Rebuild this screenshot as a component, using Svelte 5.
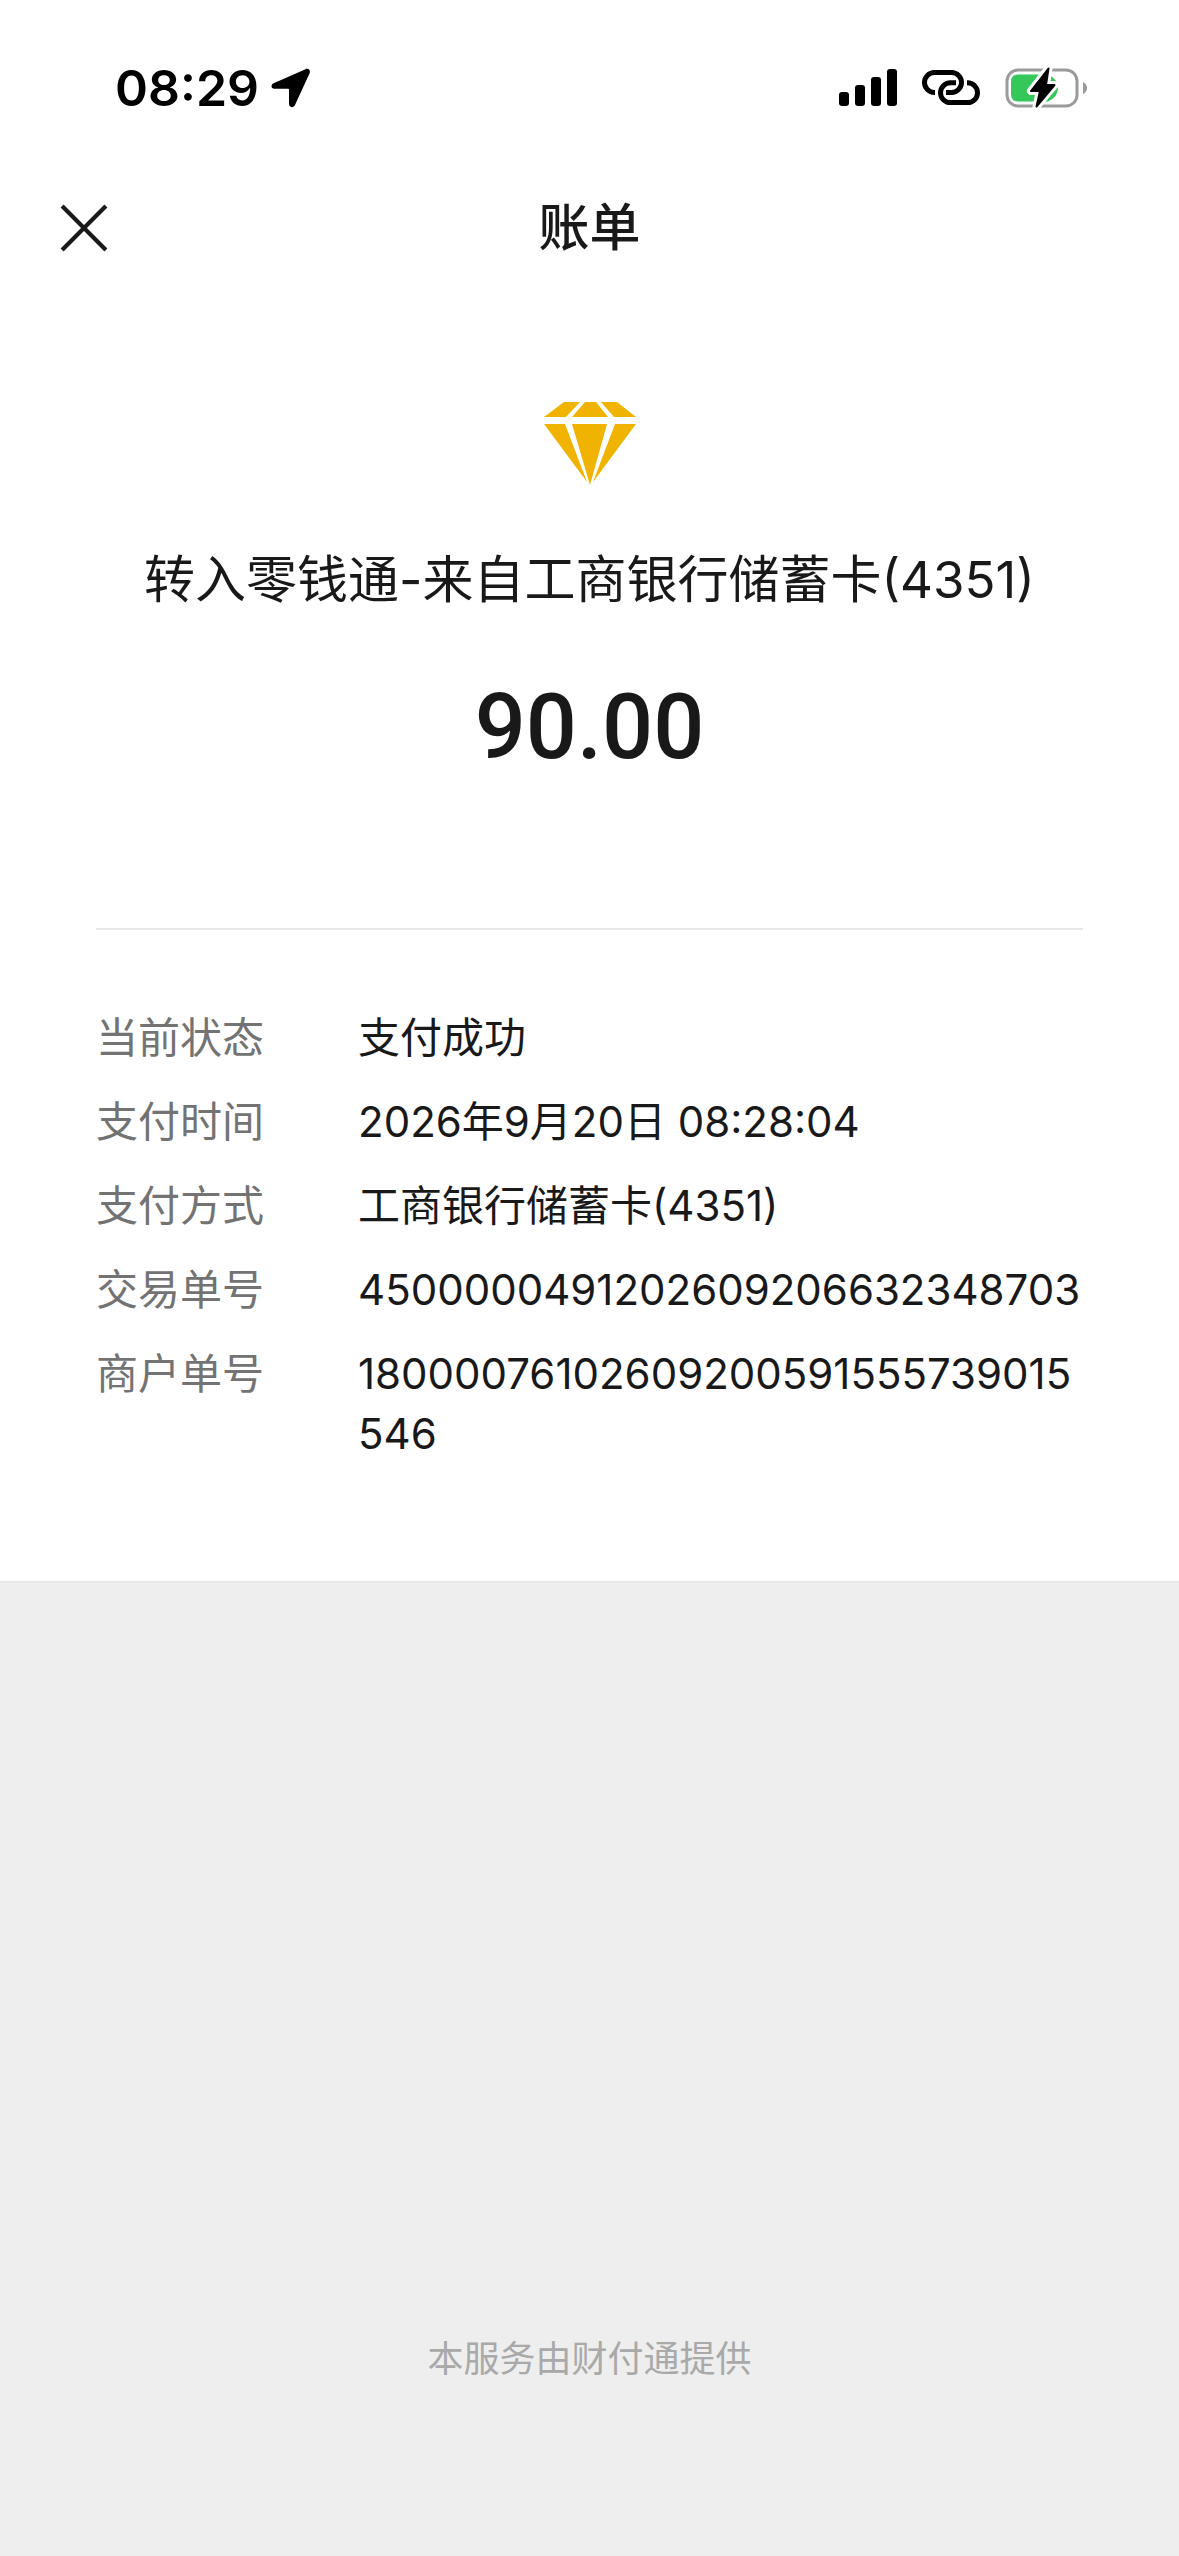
<script lang="ts">
	let open = true;

	const title = "账单";
	const name = "转入零钱通-来自工商银行储蓄卡(4351)";
	const amount = 90;

	const details = [
		{ label: "当前状态", value: "支付成功" },
		{ label: "支付时间", value: "2026年9月20日 08:28:04" },
		{ label: "支付方式", value: "工商银行储蓄卡(4351)" },
		{ label: "交易单号", value: "4500000491202609206632348703" },
		{ label: "商户单号", value: "18000076102609200591555739015546" },
	];

	function close() {
		open = false;
	}
</script>

<div class="page">
	<div class="bill">
		<div class="status-bar">
			<div class="clock">
				<span>08:29</span>
				<svg class="location" viewBox="0 0 40 40">
					<path
						d="M34.5 1.2 2.6 15.2C-.6 16.8 0 20.8 3.4 20.8H17.2Q18 20.8 18 21.6V35.6C18 39.6 22.4 40.4 24 37L38.6 5.2C39.8 2.4 37.4-.2 34.5 1.2Z"
					/>
				</svg>
			</div>
			<div class="indicators">
				<svg class="signal" viewBox="0 0 58 38">
					<rect x="0" y="23" width="10" height="14" rx="3" />
					<rect x="16" y="16" width="10" height="21" rx="3" />
					<rect x="32" y="8" width="10" height="29" rx="3" />
					<rect x="48" y="0" width="10" height="37" rx="3" />
				</svg>
				<svg class="link" viewBox="0 0 58 36">
					<path
						d="M13 22.4H12.4A9.9 9.9 0 0 1 12.4 2.6H29.6A9.9 9.9 0 0 1 29.6 22.4H24"
					/>
					<path
						d="M34 12.8H28.4A9.9 9.9 0 0 0 28.4 32.6H45.6A9.9 9.9 0 0 0 45.6 12.8H45"
					/>
				</svg>
				<svg class="battery" viewBox="0 0 84 42">
					<rect
						class="shell"
						x="2"
						y="3"
						width="70"
						height="36"
						rx="11"
					/>
					<path class="tip" d="M78 15Q82 17 82 21T78 27Z" />
					<path
						class="charge"
						d="M13 7.5H43Q53 12 53 21T43 34.5H13Q6 34.5 6 27V15Q6 7.5 13 7.5Z"
					/>
					<path
						class="bolt-gap"
						d="M43.5 1.5 26 24H35L31.5 39.5 49.5 18H41Z"
					/>
					<path
						class="bolt"
						d="M43.5 1.5 26 24H35L31.5 39.5 49.5 18H41Z"
					/>
				</svg>
			</div>
		</div>

		<header>
			<button class="close" aria-label="关闭" on:click={close}>
				<svg viewBox="0 0 46 46">
					<path d="M2 2 44 44M44 2 2 44" />
				</svg>
			</button>
			<h1>{title}</h1>
		</header>

		{#if open}
			<section class="summary">
				<svg class="diamond" viewBox="0 0 92 84">
					<path d="M20 0H36L22 15H0Z" />
					<path d="M41 0H52L64 15H28Z" />
					<path d="M57 0H73L92 15H70Z" />
					<path d="M0 22H21L43 80Z" />
					<path d="M28 22H63L46 83Z" />
					<path d="M71 22H92L49 80Z" />
				</svg>
				<h2>{name}</h2>
				<p class="amount">{amount.toFixed(2)}</p>
			</section>

			<dl>
				{#each details as item}
					<dt>{item.label}</dt>
					<dd>{item.value}</dd>
				{/each}
			</dl>
		{/if}
	</div>

	<footer>本服务由财付通提供</footer>
</div>

<style>
	:global(body) {
		margin: 0;
		background-color: #eeeeee;
	}

	.page {
		display: flex;
		flex-direction: column;
		min-height: 100vh;

		font-family: Inter, "Noto Sans CJK SC", sans-serif;
		color: #191919;
	}

	.bill {
		background-color: #ffffff;
		border-bottom: 2px solid #e8e8e8;
	}

	.status-bar {
		display: flex;
		justify-content: space-between;
		align-items: center;

		height: 176px;
		padding: 0 90px 0 115px;
		box-sizing: border-box;
	}

	.clock {
		display: flex;
		align-items: center;
		gap: 12px;

		font-size: 50px;
		font-weight: 600;
		line-height: 60px;
		color: #000000;
	}

	.location {
		width: 40px;
		height: 40px;
	}

	.indicators {
		display: flex;
		align-items: center;
		gap: 25px;
	}

	.signal {
		width: 58px;
		height: 38px;
	}

	.link {
		width: 58px;
		height: 36px;

		fill: none;
		stroke: #000000;
		stroke-width: 5;
	}

	.battery {
		width: 84px;
		height: 42px;
		overflow: visible;
	}

	.shell {
		fill: none;
		stroke: #9b9b9b;
		stroke-width: 3;
	}

	.tip {
		fill: #9b9b9b;
	}

	.charge {
		fill: #34c759;
	}

	.bolt-gap {
		fill: #ffffff;
		stroke: #ffffff;
		stroke-width: 8;
		stroke-linejoin: round;
	}

	.bolt {
		stroke: #000000;
		stroke-width: 2;
		stroke-linejoin: round;
	}

	header {
		display: grid;
		grid-template-columns: 1fr auto 1fr;
		align-items: center;

		height: 104px;
		padding: 0 60px;
	}

	.close {
		justify-self: start;
		display: flex;

		padding: 0;
		border: none;
		background: none;

		cursor: pointer;
	}

	.close svg {
		width: 48px;
		height: 48px;

		fill: none;
		stroke: #191919;
		stroke-width: 4;
	}

	h1 {
		margin: 0;

		font-size: 51px;
		font-weight: 500;
		line-height: 72px;
	}

	.summary {
		display: flex;
		flex-direction: column;
		align-items: center;

		margin: 0 96px;
		padding: 122px 0 140px;
		border-bottom: 2px solid #e8e8e8;
	}

	.diamond {
		width: 92px;
		height: 84px;

		fill: #f0b400;
	}

	h2 {
		margin: 58px 0 0;

		font-size: 51px;
		font-weight: 400;
		line-height: 72px;
		text-align: center;
	}

	.amount {
		margin: 52px 0 0;

		font-family: Roboto, sans-serif;
		font-size: 90px;
		font-weight: 500;
		line-height: 120px;
	}

	dl {
		display: grid;
		grid-template-columns: auto 1fr;
		gap: 24px 94px;

		margin: 0;
		padding: 78px 96px 117px;

		font-size: 42px;
		line-height: 60px;
	}

	dt {
		color: #737373;
	}

	dd {
		margin: 0;

		word-break: break-all;
	}

	footer {
		margin-top: auto;
		padding-bottom: 172px;

		font-size: 36px;
		line-height: 50px;
		text-align: center;
		color: #a9a9a9;
	}
</style>
